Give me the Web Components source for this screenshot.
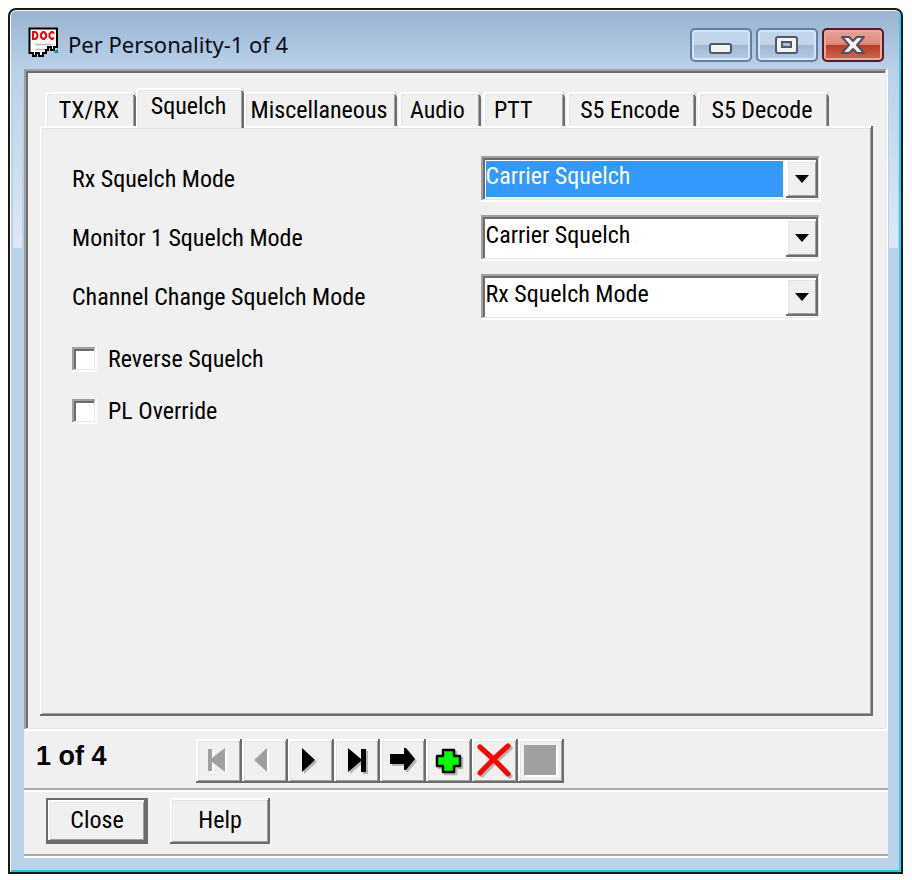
<!DOCTYPE html>
<html lang="en">
<head>
<meta charset="utf-8">
<title>Per Personality</title>
<style>
  :root {
    --face: #f0f0f0;
    --shade: #a0a0a0;
    --dark: #6c6c6c;
    --light: #e4e4e4;
    --raised: inset -2px -2px 0 var(--dark), inset 2px 2px 0 #fff, inset -3px -3px 0 var(--shade), inset 3px 3px 0 var(--light);
    --sunken: inset -2px -2px 0 #fff, inset 2px 2px 0 var(--shade), inset -3px -3px 0 var(--light), inset 4px 4px 0 var(--dark);
  }
  body {
    margin: 0; padding: 8px 9px 6px 8px; box-sizing: border-box; min-height: 100vh;
    display: flex; flex-direction: column; background: #fff; color: #000;
    font: 24px/28px "Roboto Condensed", Roboto, "Liberation Sans", sans-serif;
  }
</style>
</head>
<body>
<script>
const define = (name, html, setup) => {
  const template = document.createElement('template');
  template.innerHTML = html;
  customElements.define(name, class extends HTMLElement {
    connectedCallback() {
      if (this.shadowRoot) return;
      const root = this.attachShadow({ mode: 'open' });
      root.append(template.content.cloneNode(true));
      if (setup) setup(this, root);
    }
  });
};

/* Window frame with its title bar */
define('app-window', `
<style>
  :host { flex: 1; display: flex; flex-direction: column; box-sizing: border-box;
    border: 2px solid #181818; border-radius: 8px 8px 0 0; padding: 0 13px 14px 14px;
    box-shadow: inset 0 1px #fff, inset 1px 0 #fff, inset -2px 0 #35cfe8, inset 0 -2px #22c6dc;
    background:
      linear-gradient(#bad1ea00, #dce9f6) 3px 60px / 9px 178px no-repeat,
      linear-gradient(#bad1ea00, #dce9f6) right 3px top 60px / 9px 178px no-repeat,
      linear-gradient(#98b3d1, #bad1ea 60px); }
  header { display: flex; align-items: center; gap: 4px; height: 59px; padding: 0 4px; box-sizing: border-box; }
  h1 { flex: 1; margin: 9px 0 0 5px; font: 22px/30px "Noto Sans", "Open Sans", sans-serif; color: #0a0a14; }
  button { width: 62px; height: 34px; margin: 10px 0 0; padding: 0; border: 2px solid #65809f; border-radius: 5px;
    background: linear-gradient(#c3d5ea 48%, #9db7d3 50%, #b6cde6); box-shadow: inset 0 0 0 2px #d5e4f5; }
  button.close { border-color: #5a1a26; background: linear-gradient(#e5a397, #dc8a7c 48%, #b93a25 50%, #d06a52); box-shadow: inset 0 0 0 2px #eaa99d; margin-left: 0; }
  svg { display: block; margin: auto; }
  .icon { margin: 6px 0 0; }
</style>
<header>
  <svg class="icon" width="31" height="31" viewBox="0 0 31 31">
    <path d="M1.5 1.5H29V20H26V23H23V20H20V23H18V26H15V29H11V26H8V29H5V26H1.5Z" fill="#fff" stroke="#000" stroke-width="2"/>
    <path d="M5 5v7h2.5q2-1 2-3.500t-2-3.500zM15 5l-2 2v3l2 2h1l2-2v-3l-2-2zM26 6.500l-1.500-1.500h-1l-2 2v3l2 2h1l1.500-1.500" fill="none" stroke="#f00" stroke-width="2"/>
    <path d="M7 17.500H23M7 22.500H17" stroke="#b8b8b8" stroke-width="1.500"/>
    <path d="M27 24l3-2v4h-4z" fill="#0a8f86"/>
  </svg>
  <h1><slot name="title"></slot></h1>
  <button aria-label="Minimize"><svg width="58" height="30" viewBox="0 0 58 30"><rect x="18" y="14" width="21" height="9" rx="2" fill="#f3f3f1" stroke="#4f596a" stroke-width="2"/></svg></button>
  <button aria-label="Maximize"><svg width="58" height="30" viewBox="0 0 58 30"><rect x="18" y="7" width="21" height="16" rx="2" fill="#f3f3f1" stroke="#4f596a" stroke-width="2"/><rect x="24" y="12" width="9" height="5" fill="#a7bedb" stroke="#4f596a" stroke-width="2"/></svg></button>
  <button class="close" aria-label="Close window"><svg width="58" height="30" viewBox="0 0 58 30"><path d="M18 7h7l4 4 4-4h7l-7 8 7 8h-7l-4-4-4 4h-7l7-8z" fill="#f3f3f1" stroke="#50505e" stroke-width="2" stroke-linejoin="round"/></svg></button>
</header>
<slot></slot>`);

/* Sunken area that holds the tab strip and its page */
define('tab-panel', `
<style>
  :host { flex: 1; display: flex; flex-direction: column; box-sizing: border-box; padding: 19px 15px 15px 16px; background: var(--face); box-shadow: var(--sunken); }
  nav { display: flex; align-items: flex-end; gap: 2px; padding-left: 5px; }
  .page { flex: 1; display: flex; flex-direction: column; background: var(--face); padding: 30px 52px 30px 32px; box-shadow: var(--raised); }
</style>
<nav role="tablist"><slot name="tab"></slot></nav>
<div class="page"><slot></slot></div>`);

define('tab-item', `
<style>
  :host { display: block; flex: 0 1 var(--w); min-width: 0; }
  :host([selected]) { position: relative; z-index: 1; margin: 0 -2px -2px; }
  button { width: 100%; height: 34px; padding: 2px 3px 0 0; border: 0; border-radius: 4px 4px 0 0; background: var(--face);
    font: inherit; color: inherit; text-align: center; white-space: nowrap;
    box-shadow: inset 0 2px #fff, inset 2px 0 #fff, inset -2px 0 var(--dark), inset -3px 0 var(--shade), inset 3px 3px var(--light); }
  :host([short]) button { text-align: left; padding-left: 11px; }
  :host([selected]) button { height: 40px; padding: 0 3px 4px 0; }
</style>
<button role="tab"><slot></slot></button>`, (host, root) =>
  root.querySelector('button').setAttribute('aria-selected', host.hasAttribute('selected')));

/* Label and drop-down */
define('select-field', `
<style>
  :host { display: grid; grid-template-columns: 6fr 5fr; align-items: center; }
  .box { display: grid; grid-template-columns: 1fr 32px; padding: 4px 3px 4px 4px; height: 46px; box-sizing: border-box; background: #fff; box-shadow: var(--sunken); }
  select { grid-area: 1 / 1 / 2 / 3; appearance: none; border: 0; outline: 0; margin: 0; padding: 0 36px 6px 1px; background: none; font: inherit; color: inherit; min-width: 0; }
  .arrow { grid-area: 1 / 2; pointer-events: none; background: var(--face); box-shadow: var(--raised); display: grid; place-items: center; }
  :host([active]) select { color: #fff; background: linear-gradient(#3399ff, #3399ff) 1px 1px / calc(100% - 36px) calc(100% - 2px) no-repeat; }
</style>
<label for="s"></label>
<div class="box"><select id="s"><option></option></select>
<span class="arrow"><svg width="14" height="8" viewBox="0 0 14 8"><path d="M0 0h14L7 8z"/></svg></span></div>`, (host, root) => {
  root.querySelector('label').textContent = host.getAttribute('label');
  root.querySelector('option').textContent = host.getAttribute('value');
});

define('check-field', `
<style>
  :host { display: block; }
  label { display: flex; align-items: center; gap: 11px; }
  input { appearance: none; width: 25px; height: 25px; margin: 0; background: #fff; box-shadow: var(--sunken); }
</style>
<label><input type="checkbox"><span><slot></slot></span></label>`);

define('form-rows', `
<style>:host { display: grid; gap: var(--gap); margin-bottom: var(--after, 0); }</style><slot></slot>`);

/* Record navigation */
define('record-bar', `
<style>
  :host { display: flex; align-items: center; height: 59px; box-sizing: border-box; padding-left: 12px; background: var(--face); box-shadow: inset 0 -2px #a8a8a8; }
  strong { width: 160px; margin-bottom: 10px; font: bold 27px/32px "Liberation Sans", sans-serif; }
  div { display: flex; }
  button { padding: 0; border: 0; width: 46px; height: 44px; background: var(--face); box-shadow: var(--raised); }
  svg { display: block; }
  button svg { filter: drop-shadow(2px 2px 0 #b4b4b4); }
  button:disabled svg { filter: drop-shadow(2px 2px 0 #fff); fill: #a0a0a0; }
</style>
<strong><slot></slot></strong>
<div>
  <button disabled aria-label="First"><svg width="46" height="44"><path d="M12 10h4v9L29 9v24L16 23v9h-4z"/></svg></button>
  <button disabled aria-label="Previous"><svg width="46" height="44"><path d="M12 21L25 9v24z"/></svg></button>
  <button aria-label="Next"><svg width="46" height="44"><path d="M14 9L27 21 14 33z"/></svg></button>
  <button aria-label="Last"><svg width="46" height="44"><path d="M14 9L27 20V10h5v23h-5V22L14 33z"/></svg></button>
  <button aria-label="Go to"><svg width="46" height="44"><path d="M10 15h14V9h2l9 11-9 11h-2v-6H10z"/></svg></button>
  <button aria-label="Add"><svg width="46" height="44"><path d="M17 11h11v6h6v10h-6v6H17v-6h-6V17h6z" fill="#0f0" stroke="#000" stroke-width="2.500" stroke-linejoin="round"/></svg></button>
  <button aria-label="Delete"><svg width="46" height="44"><path d="M8 8Q23 21 36 35M36 7Q20 21 8 34" fill="none" stroke="#f00" stroke-width="5" stroke-linecap="round"/></svg></button>
  <button disabled aria-label="Stop"><svg width="46" height="44"><path d="M6 6h32v30H6z"/></svg></button>
</div>`);

define('action-bar', `
<style>
  :host { display: flex; align-items: flex-start; gap: 22px; height: 68px; box-sizing: border-box; padding: 8px 22px; background: var(--face);
    box-shadow: inset 0 2px #fff, inset 0 -2px #fff, inset 0 -4px #a8a8a8; }
</style><slot></slot>`);

define('push-button', `
<style>
  :host { display: block; }
  button { min-width: 100px; height: 46px; border: 0; padding: 0 24px 2px; background: var(--face); font: inherit; color: inherit; box-shadow: var(--raised); }
  :host([default]) button { min-width: 102px;
    box-shadow: inset 0 0 0 2px var(--dark), inset -4px -4px var(--dark), inset 4px 4px #fff, inset -5px -5px var(--shade), inset 5px 5px var(--light); }
</style><button><slot></slot></button>`);
</script>

<app-window>
  <span slot="title">Per Personality-1 of 4</span>
  <tab-panel>
    <tab-item slot="tab" style="--w:91px">TX/RX</tab-item>
    <tab-item slot="tab" selected style="--w:108px">Squelch</tab-item>
    <tab-item slot="tab" style="--w:153px">Miscellaneous</tab-item>
    <tab-item slot="tab" short style="--w:82px">Audio</tab-item>
    <tab-item slot="tab" short style="--w:82px">PTT</tab-item>
    <tab-item slot="tab" style="--w:129px">S5 Encode</tab-item>
    <tab-item slot="tab" style="--w:131px">S5 Decode</tab-item>
    <form-rows style="--gap:13px; --after:25px">
      <select-field active label="Rx Squelch Mode" value="Carrier Squelch"></select-field>
      <select-field label="Monitor 1 Squelch Mode" value="Carrier Squelch"></select-field>
      <select-field label="Channel Change Squelch Mode" value="Rx Squelch Mode"></select-field>
    </form-rows>
    <form-rows style="--gap:24px">
      <check-field>Reverse Squelch</check-field>
      <check-field>PL Override</check-field>
    </form-rows>
  </tab-panel>
  <record-bar>1 of 4</record-bar>
  <action-bar>
    <push-button default>Close</push-button>
    <push-button>Help</push-button>
  </action-bar>
</app-window>
</body>
</html>
